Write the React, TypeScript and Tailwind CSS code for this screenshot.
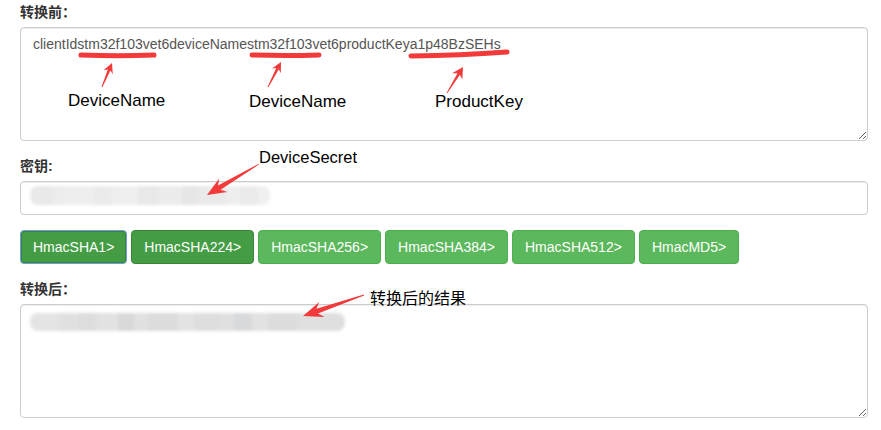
import React from "react";

const RED = "#f23a3a";

function arrowPoints(x1: number, y1: number, x2: number, y2: number, L: number, H: number, w: number) {
  const dx = x2 - x1;
  const dy = y2 - y1;
  const len = Math.hypot(dx, dy);
  const ux = dx / len;
  const uy = dy / len;
  const nx = -uy;
  const ny = ux;
  const bx = x2 - ux * L;
  const by = y2 - uy * L;
  // notch the head a little behind the shaft join
  const kx = x2 - ux * (L * 0.75);
  const ky = y2 - uy * (L * 0.75);
  const pts = [
    [x1 + nx * 0.4, y1 + ny * 0.4],
    [kx + nx * w, ky + ny * w],
    [bx + nx * H, by + ny * H],
    [x2, y2],
    [bx - nx * H, by - ny * H],
    [kx - nx * w, ky - ny * w],
    [x1 - nx * 0.4, y1 - ny * 0.4],
  ];
  return pts.map((p) => p.map((v) => v.toFixed(1)).join(",")).join(" ");
}

const secretBlur: [number, string][] = [
  [22, "#e9e9e9"], [12, "#ececec"], [30, "#eeeeee"], [18, "#ebebeb"], [26, "#efefef"],
  [20, "#e8e8e8"], [24, "#ececec"], [16, "#e6e6e6"], [28, "#eaeaea"], [14, "#eeeeee"],
  [18, "#ebebeb"], [12, "#f0f0f0"],
];

const resultBlur: [number, string][] = [
  [28, "#e4e4e4"], [20, "#e0e0e0"], [18, "#dddddd"], [22, "#e2e2e2"], [16, "#d9d9d9"],
  [14, "#e1e1e1"], [30, "#dcdcdc"], [16, "#e3e3e3"], [26, "#dedede"], [14, "#e0e0e0"],
  [18, "#d8dadc"], [16, "#e2e2e2"], [30, "#dcdcdc"], [22, "#e0e0e0"], [25, "#dfdfdf"],
];

function Blur({ blocks, h }: { blocks: [number, string][]; h: number }) {
  return (
    <div className="flex blur-[1.5px] rounded-[8px] overflow-hidden" style={{ height: h }}>
      {blocks.map(([w, c], i) => (
        <div key={i} style={{ width: w, background: c }} />
      ))}
    </div>
  );
}

function Label({ children }: { children: React.ReactNode }) {
  return <label className="block mb-[5px] font-bold text-[14px] leading-[20px] text-[#333]">{children}</label>;
}

const buttons = [
  { t: "HmacSHA1>", cls: "bg-[#449d44] border-[#6f9fd8] shadow-[inset_0_0_0_1px_#398439]" },
  { t: "HmacSHA224>", cls: "bg-[#449d44] border-[#398439]" },
  { t: "HmacSHA256>", cls: "bg-[#5cb85c] border-[#4cae4c]" },
  { t: "HmacSHA384>", cls: "bg-[#5cb85c] border-[#4cae4c]" },
  { t: "HmacSHA512>", cls: "bg-[#5cb85c] border-[#4cae4c]" },
  { t: "HmacMD5>", cls: "bg-[#5cb85c] border-[#4cae4c]" },
];

export default function App() {
  const field =
    "block w-full border border-[#ccc] rounded-[4px] px-[12px] py-[6px] text-[14px] leading-[20px] text-[#555] bg-white shadow-[inset_0_1px_1px_rgba(0,0,0,0.075)] outline-none";
  return (
    <div className="relative w-[881px] h-[430px] overflow-hidden bg-white font-['Liberation_Sans','Noto_Sans_CJK_SC',sans-serif]">
      <div className="ml-[20px] w-[848px] pt-[2px]">
        <div className="mb-[15px]">
          <Label>转换前：</Label>
          <textarea
            readOnly
            className={`${field} h-[114px]`}
            value="clientIdstm32f103vet6deviceNamestm32f103vet6productKeya1p48BzSEHs"
          />
        </div>

        <div className="mb-[15px]">
          <Label>密钥:</Label>
          <div className="relative">
            <input readOnly className={`${field} h-[34px]`} value="" />
            <div className="absolute left-[10px] top-[5px] w-[240px]">
              <Blur blocks={secretBlur} h={19} />
            </div>
          </div>
        </div>

        <div className="flex gap-[4px] mb-[15px]">
          {buttons.map((b) => (
            <button
              key={b.t}
              className={`${b.cls} border rounded-[4px] px-[12px] py-[6px] text-[14px] leading-[20px] text-white`}
            >
              {b.t}
            </button>
          ))}
        </div>

        <div>
          <Label>转换后：</Label>
          <div className="relative">
            <textarea readOnly className={`${field} h-[114px]`} value="" />
            <div className="absolute left-[10px] top-[9px] w-[315px]">
              <Blur blocks={resultBlur} h={18} />
            </div>
          </div>
        </div>
      </div>

      {/* annotations drawn over the form */}
      <svg className="absolute inset-0 pointer-events-none" width="881" height="430">
        <g stroke={RED} strokeWidth="5" strokeLinecap="round" fill="none">
          <path d="M81 55 Q118 56.5 154 55" />
          <path d="M252 55 Q286 56 319 55" />
          <path d="M411 56 Q460 55.5 507 52" />
        </g>
        <g fill={RED}>
          <polygon points={arrowPoints(102, 87, 112, 63, 10, 5, 1.4)} />
          <polygon points={arrowPoints(268, 87, 281, 62, 10, 5, 1.4)} />
          <polygon points={arrowPoints(447, 93, 463, 67, 11, 6, 1.4)} />
          <polygon points={arrowPoints(259, 164, 207, 195, 19, 8, 2.4)} />
          <polygon points={arrowPoints(364, 295, 303, 316, 20, 8, 2.4)} />
        </g>
      </svg>

      <span className="absolute left-[68px] top-[92px] text-[17px] leading-none text-black font-['Liberation_Sans',sans-serif]">DeviceName</span>
      <span className="absolute left-[249px] top-[93px] text-[17px] leading-none text-black font-['Liberation_Sans',sans-serif]">DeviceName</span>
      <span className="absolute left-[435px] top-[93px] text-[17px] leading-none text-black font-['Liberation_Sans',sans-serif]">ProductKey</span>
      <span className="absolute left-[259px] top-[149px] text-[16.5px] leading-none text-black font-['Liberation_Sans',sans-serif]">DeviceSecret</span>
      <span className="absolute left-[370px] top-[289px] text-[16px] leading-none text-black font-['Noto_Sans_CJK_SC',sans-serif]">转换后的结果</span>
    </div>
  );
}
